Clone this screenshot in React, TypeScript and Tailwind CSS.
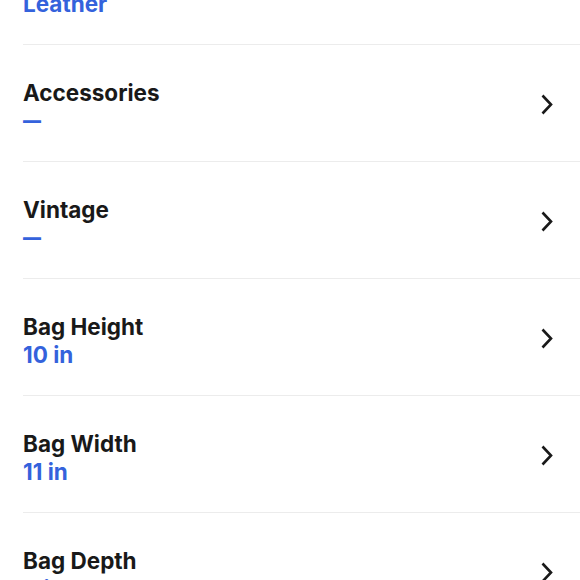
import React from "react";

const rows = [
  { title: "Material", value: "Leather" },
  { title: "Accessories", value: "—" },
  { title: "Vintage", value: "—" },
  { title: "Bag Height", value: "10 in" },
  { title: "Bag Width", value: "11 in" },
  { title: "Bag Depth", value: "4 in" },
];

function Chevron() {
  return (
    <svg width="14" height="22" viewBox="0 0 14 22" fill="none" className="shrink-0 mt-[3px]">
      <path d="M2.5 1.5 L11 10.5 L2.5 19.5" stroke="#191919" strokeWidth="2.6" strokeLinecap="butt" strokeLinejoin="miter" />
    </svg>
  );
}

export default function App() {
  return (
    <div className="w-[580px] h-[580px] overflow-hidden bg-white" style={{ fontFamily: "Inter, 'Noto Sans', sans-serif" }}>
      <div className="mt-[-72px] pl-[23px]">
        {rows.map((r) => (
          <div key={r.title} className="h-[117px] flex items-center justify-between border-b border-[#ececec] pr-[26px]">
            <div className="flex flex-col pt-[7px]">
              <span className="text-[22.5px] leading-[28px] font-bold text-[#191919]">{r.title}</span>
              {r.value === "—" ? (
                <span className="text-[18px] leading-[28px] font-black text-[#3462dc]">{r.value}</span>
              ) : (
                <span className="text-[22.5px] leading-[28px] font-bold text-[#3462dc]">{r.value}</span>
              )}
            </div>
            <Chevron />
          </div>
        ))}
      </div>
    </div>
  );
}
